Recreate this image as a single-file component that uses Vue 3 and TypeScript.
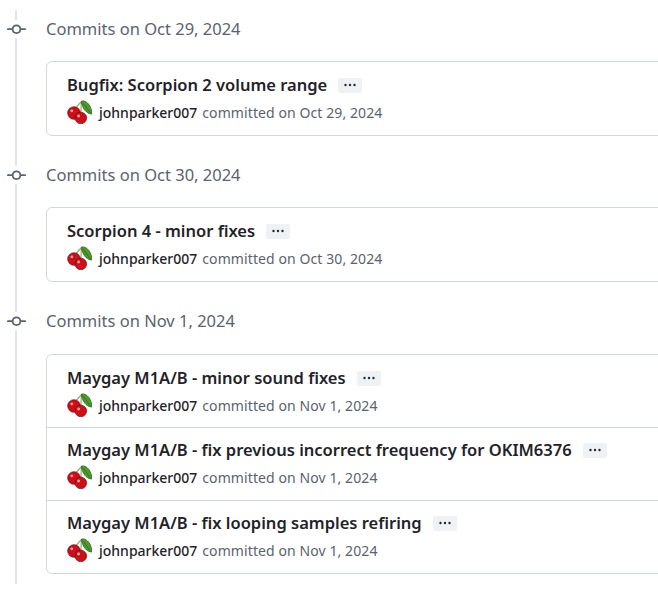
<script setup lang="ts">
interface Commit { title: string; date: string }
interface Group { date: string; commits: Commit[] }
const groups: Group[] = [
  { date: 'Oct 29, 2024', commits: [{ title: 'Bugfix: Scorpion 2 volume range', date: 'Oct 29, 2024' }] },
  { date: 'Oct 30, 2024', commits: [{ title: 'Scorpion 4 - minor fixes', date: 'Oct 30, 2024' }] },
  { date: 'Nov 1, 2024', commits: [
    { title: 'Maygay M1A/B - minor sound fixes', date: 'Nov 1, 2024' },
    { title: 'Maygay M1A/B - fix previous incorrect frequency for OKIM6376', date: 'Nov 1, 2024' },
    { title: 'Maygay M1A/B - fix looping samples refiring', date: 'Nov 1, 2024' },
  ] },
]
</script>

<template>
  <div class="page">
    <div class="timeline">
      <section v-for="g in groups" :key="g.date" class="group">
        <h2 class="head">
          <span class="node">
            <svg width="19" height="19" viewBox="0 0 16 16" fill="#59636e"><path d="M11.93 8.5a4.002 4.002 0 0 1-7.86 0H.75a.75.75 0 0 1 0-1.5h3.32a4.002 4.002 0 0 1 7.86 0h3.32a.75.75 0 0 1 0 1.5Zm-1.43-.75a2.5 2.5 0 1 0-5 0 2.5 2.5 0 0 0 5 0Z"/></svg>
          </span>
          Commits on {{ g.date }}
        </h2>
        <ul class="card">
          <li v-for="c in g.commits" :key="c.title" class="row">
            <div class="title-line">
              <span class="title">{{ c.title }}</span>
              <span class="more">
                <svg width="12" height="12" viewBox="0 0 12 12" fill="#25292e"><circle cx="1.5" cy="6" r="1.2"/><circle cx="6" cy="6" r="1.2"/><circle cx="10.5" cy="6" r="1.2"/></svg>
              </span>
            </div>
            <div class="meta">
              <svg class="avatar" width="25" height="24" viewBox="0 0 25 24">
                <path d="M7 12C8 8 11 5 14.5 1.5M14 17C14 11 14 6 14.5 1.5" fill="none" stroke="#9aa873" stroke-width="1.2"/>
                <path d="M14.5 1C20 0 24.5 6 25 14 20.5 14 17 10 16 7 15 5 14.5 3 14.5 1Z" fill="#4f9a2c" stroke="#2c5e1a" stroke-width=".8"/>
                <path d="M16 3 23.5 13" stroke="#2c5e1a" stroke-width=".7" fill="none"/>
                <circle cx="7" cy="13" r="6.3" fill="#cc1019" stroke="#6d0d10" stroke-width=".7"/>
                <circle cx="13.8" cy="18" r="5.8" fill="#cc1019" stroke="#6d0d10" stroke-width=".7"/>
                <circle cx="4.8" cy="10.8" r="1.4" fill="#f3a6a6"/>
                <circle cx="11.6" cy="16" r="1.4" fill="#f3a6a6"/>
              </svg>
              <span class="author">johnparker007</span>
              <span class="when">committed on {{ c.date }}</span>
            </div>
          </li>
        </ul>
      </section>
    </div>
  </div>
</template>

<style>
html, body { margin: 0; background: #fff; overflow: hidden; }
</style>

<style scoped>
.page {
  width: 658px;
  height: 593px;
  overflow: hidden;
  font-family: "Noto Sans", "Open Sans", sans-serif;
  padding-top: 10px;
  box-sizing: border-box;
}
.timeline {
  margin-left: 15px;
  width: 700px;
  height: 574px;
  border-left: 2px solid #dfe4e9;
  padding-left: 29px;
  box-sizing: border-box;
}
.group { margin-bottom: 20px; }
.head {
  position: relative;
  margin: 0;
  height: 38px;
  line-height: 38px;
  font-size: 16.5px;
  font-weight: 400;
  color: #59636e;
}
.node {
  position: absolute;
  left: -41px;
  top: 10px;
  width: 22px;
  height: 18px;
  background: #fff;
  display: flex;
  align-items: center;
  justify-content: center;
}
.card {
  list-style: none;
  margin: 13px 0 0;
  padding: 0;
  border: 1px solid #d1d9e0;
  border-radius: 6px;
}
.group:last-child .card { margin-top: 14px; }
.row {
  height: 73px;
  padding: 10px 20px 0;
  box-sizing: border-box;
  border-top: 1px solid #d1d9e0;
}
.row:first-child { border-top: 0; padding-top: 11px; }
.row:first-child:not(:last-child) { height: 72px; }
.title-line {
  display: flex;
  align-items: center;
  gap: 11px;
  height: 24px;
}
.title { font-size: 16.5px; font-weight: 600; color: #1f2328; line-height: 24px; }
.more {
  width: 24px;
  height: 15px;
  border-radius: 2px;
  background: #eff2f5;
  display: flex;
  align-items: center;
  justify-content: center;
}
.meta {
  display: flex;
  align-items: center;
  margin-top: 3px;
  height: 24px;
  font-size: 14px;
}
.avatar { flex: none; margin-right: 7px; }
.author { font-weight: 500; color: #1f2328; }
.when { color: #59636e; margin-left: 5px; letter-spacing: 0.09px; }
</style>
